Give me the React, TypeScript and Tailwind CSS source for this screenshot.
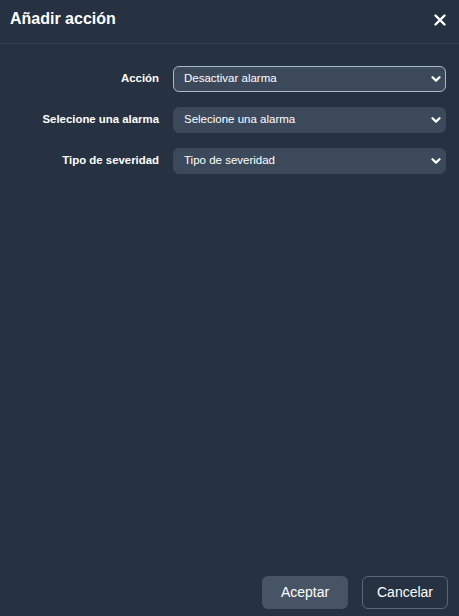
import React, { useState } from 'react';

const ChevronDown: React.FC = () => (
  <svg className="pointer-events-none absolute right-[5px] top-1/2 -translate-y-1/2" width="10" height="8" viewBox="0 0 10 8" fill="none">
    <path d="M1.5 2.2 L5 5.6 L8.5 2.2" stroke="#ffffff" strokeWidth="2.2" strokeLinecap="round" strokeLinejoin="round" />
  </svg>
);

type Field = { label: string; value: string; focused?: boolean };

const AddActionModal: React.FC = () => {
  const [fields] = useState<Field[]>([
    { label: 'Acción', value: 'Desactivar alarma', focused: true },
    { label: 'Selecione una alarma', value: 'Selecione una alarma' },
    { label: 'Tipo de severidad', value: 'Tipo de severidad' },
  ]);

  return (
    <div className="h-screen w-full flex flex-col bg-[#263141] text-white" style={{ fontFamily: '"Liberation Sans", Arial, sans-serif' }}>
      <div className="h-[44px] flex items-center justify-between pl-[10px] pr-[13px] border-b border-[#313d4d]">
        <h2 className="text-[16px] font-bold leading-none -mt-[6px]">Añadir acción</h2>
        <button className="-mt-[4px] text-white">
          <svg width="12" height="12" viewBox="0 0 12 12" fill="none">
            <path d="M1.5 1.5 L10.5 10.5 M10.5 1.5 L1.5 10.5" stroke="#ffffff" strokeWidth="2.4" strokeLinecap="round" />
          </svg>
        </button>
      </div>

      <div className="flex flex-col gap-[15px] px-[13px] pt-[22px]">
        {fields.map(f => (
          <div key={f.label} className="flex items-center gap-[14px]">
            <label className="w-[146px] text-right text-[11.4px] font-bold">{f.label}</label>
            <div className="relative flex-1">
              <div
                className={`h-[26px] flex items-center pl-[10px] rounded-[6px] bg-[#3c495b] text-[11.5px] border ${
                  f.focused ? 'border-[#a7bcc6]' : 'border-[#3c495b]'
                }`}
              >
                {f.value}
              </div>
              <ChevronDown />
            </div>
          </div>
        ))}
      </div>

      <div className="mt-auto flex justify-end gap-[14px] pr-[11px] pb-[7px]">
        <button className="w-[86px] h-[33px] rounded-[6px] bg-[#475466] text-[14px] text-white">Aceptar</button>
        <button className="w-[86px] h-[33px] rounded-[6px] border border-[#5b6777] text-[14px] text-white">Cancelar</button>
      </div>
    </div>
  );
};

export default AddActionModal;
